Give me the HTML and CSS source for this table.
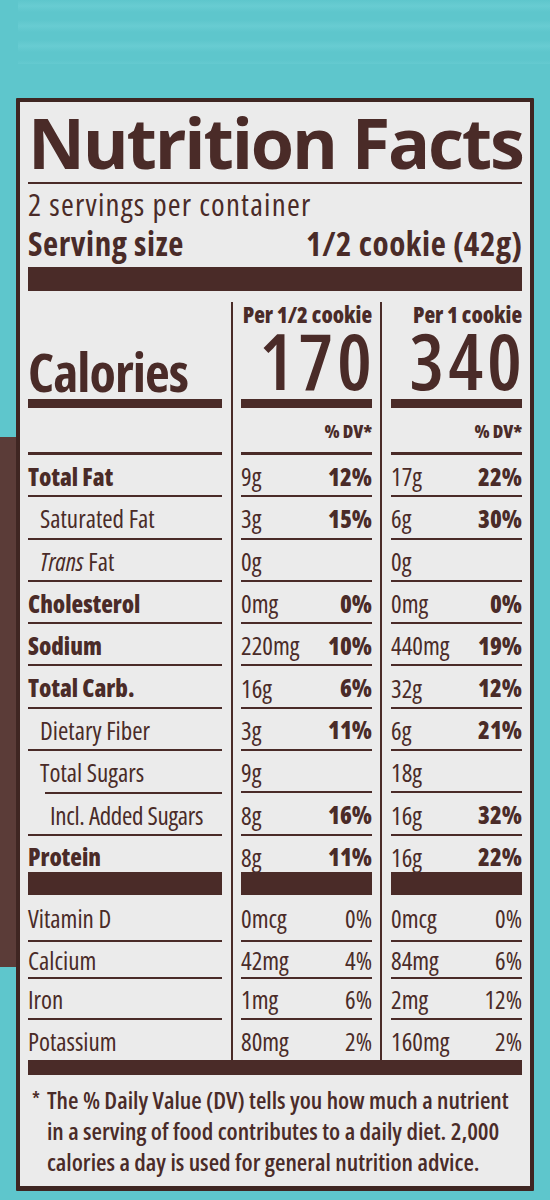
FILE: index.html
```html
<!DOCTYPE html>
<html lang="en"><head><meta charset="UTF-8"><title>Nutrition Facts</title>
<link rel="stylesheet" href="styles.css">
</head><body>

<div class="pack">
  <section class="label">
    <h1 class="title">Nutrition Facts</h1>
    <div class="servings">2 servings per container</div>
    <div class="size"><span>Serving size</span><span>1/2 cookie (42g)</span></div>
    <div class="bar thick"></div>

    <div class="facts">
      <!-- calories -->
      <div class="cell first"><div class="in cal"><span class="cal-name">Calories</span></div></div>
      <div class="cell mid"><div class="in cal"><span class="per">Per 1/2 cookie</span><span class="kcal">170</span></div></div>
      <div class="cell last"><div class="in cal"><span class="per">Per 1 cookie</span><span class="kcal">340</span></div></div>

      <div class="cell first"><div class="in dv"></div></div>
      <div class="cell mid"><div class="in dv"><b>% DV*</b></div></div>
      <div class="cell last"><div class="in dv"><b>% DV*</b></div></div>

      <div class="cell first"><div class="in"><b>Total Fat</b></div></div>
      <div class="cell mid"><div class="in"><span>9g</span><b>12%</b></div></div>
      <div class="cell last"><div class="in"><span>17g</span><b>22%</b></div></div>

      <div class="cell first"><div class="in sub">Saturated Fat</div></div>
      <div class="cell mid"><div class="in"><span>3g</span><b>15%</b></div></div>
      <div class="cell last"><div class="in"><span>6g</span><b>30%</b></div></div>

      <div class="cell first"><div class="in sub"><span><i>Trans</i> Fat</span></div></div>
      <div class="cell mid"><div class="in"><span>0g</span></div></div>
      <div class="cell last"><div class="in"><span>0g</span></div></div>

      <div class="cell first"><div class="in"><b>Cholesterol</b></div></div>
      <div class="cell mid"><div class="in"><span>0mg</span><b>0%</b></div></div>
      <div class="cell last"><div class="in"><span>0mg</span><b>0%</b></div></div>

      <div class="cell first"><div class="in"><b>Sodium</b></div></div>
      <div class="cell mid"><div class="in"><span>220mg</span><b>10%</b></div></div>
      <div class="cell last"><div class="in"><span>440mg</span><b>19%</b></div></div>

      <div class="cell first"><div class="in"><b>Total Carb.</b></div></div>
      <div class="cell mid"><div class="in"><span>16g</span><b>6%</b></div></div>
      <div class="cell last"><div class="in"><span>32g</span><b>12%</b></div></div>

      <div class="cell first"><div class="in sub">Dietary Fiber</div></div>
      <div class="cell mid"><div class="in"><span>3g</span><b>11%</b></div></div>
      <div class="cell last"><div class="in"><span>6g</span><b>21%</b></div></div>

      <div class="cell first"><div class="in sub short">Total Sugars</div></div>
      <div class="cell mid"><div class="in"><span>9g</span></div></div>
      <div class="cell last"><div class="in"><span>18g</span></div></div>

      <div class="cell first"><div class="in sub2">Incl. Added Sugars</div></div>
      <div class="cell mid"><div class="in"><span>8g</span><b>16%</b></div></div>
      <div class="cell last"><div class="in"><span>16g</span><b>32%</b></div></div>

      <div class="cell first"><div class="in heavy"><b>Protein</b></div></div>
      <div class="cell mid"><div class="in heavy"><span>8g</span><b>11%</b></div></div>
      <div class="cell last"><div class="in heavy"><span>16g</span><b>22%</b></div></div>

      <div class="cell first"><div class="in vit v1">Vitamin D</div></div>
      <div class="cell mid"><div class="in vit v1"><span>0mcg</span><span>0%</span></div></div>
      <div class="cell last"><div class="in vit v1"><span>0mcg</span><span>0%</span></div></div>

      <div class="cell first"><div class="in vit v2">Calcium</div></div>
      <div class="cell mid"><div class="in vit v2"><span>42mg</span><span>4%</span></div></div>
      <div class="cell last"><div class="in vit v2"><span>84mg</span><span>6%</span></div></div>

      <div class="cell first"><div class="in vit">Iron</div></div>
      <div class="cell mid"><div class="in vit"><span>1mg</span><span>6%</span></div></div>
      <div class="cell last"><div class="in vit"><span>2mg</span><span>12%</span></div></div>

      <div class="cell first"><div class="in vit end">Potassium</div></div>
      <div class="cell mid"><div class="in vit end"><span>80mg</span><span>2%</span></div></div>
      <div class="cell last"><div class="in vit end"><span>160mg</span><span>2%</span></div></div>
    </div>
    <div class="bar bottom"></div>

    <p class="note"><span class="star">*</span><span>The % Daily Value (DV) tells you how much a nutrient<br>in a serving of food contributes to a daily diet. 2,000<br>calories a day is used for general nutrition advice.</span></p>
  </section>
  <div class="maker">© MUNK PACK INC., GREENWICH, CT</div>
</div>

</body></html>
```

FILE: styles.css
```css
*{box-sizing:border-box;margin:0;padding:0}
body{width:550px;height:1200px;overflow:hidden;color:#4a2b28;font-family:'Open Sans',sans-serif;font-stretch:75%;
  background:
    linear-gradient(to bottom,#5ec6cc 0,#5ec6cc 437px,#5b3c38 437px,#5b3c38 967px,#5ec6cc 967px) 0 0/18px 100% no-repeat,
    repeating-linear-gradient(to bottom,#5ec6cc 0,#68ccd2 6px,#5ec6cc 12px,#5ec6cc 20px) 0 0/100% 64px no-repeat,
    #5ec6cc}
.pack{padding-top:98px}
/* label */
.label{margin:0 16px;background:#ebebeb;border:4px solid #3f2622;border-bottom-width:5px;padding:6px 8px 9px;border-radius:1px}
.title{font-size:70px;font-weight:700;font-stretch:100%;line-height:68px;letter-spacing:-2.2px;white-space:nowrap;padding-bottom:6px;border-bottom:2px solid #4a2b28}
.servings{font-size:31px;line-height:32px;margin-top:4px;letter-spacing:1.2px}
.size{display:flex;justify-content:space-between;font-size:33px;font-weight:700;line-height:38px;letter-spacing:0.6px;margin-top:5px}
.size span:last-child{margin-right:-0.6px}
.bar{background:#4a2b28}
.thick{height:24px;margin-top:4px}
/* table */
.facts{display:grid;grid-template-columns:203px 149px 142px;margin-top:11px}
.cell.first{padding-right:9px}
.cell.mid{border-left:2px solid #4a2b28;padding:0 8px}
.cell.last{border-left:2px solid #4a2b28;padding-left:9px}
.in{height:42.3px;display:flex;justify-content:space-between;align-items:center;font-size:25px;border-bottom:2.5px solid #4a2b28;white-space:nowrap;padding-top:2px}
.in b{font-weight:800;font-size:24px}
.in.sub{padding-left:12px}
.in.sub2{padding-left:22px;letter-spacing:-0.3px}
.short{border-bottom-color:transparent;position:relative}
.short::after{content:'';position:absolute;left:17px;right:0;bottom:-2.5px;border-bottom:2.5px solid #4a2b28}
.in.cal{height:106px;border-bottom-width:9px;flex-direction:column;align-items:flex-end;justify-content:flex-start;padding-top:0}
.cal-name{align-self:flex-start;font-size:54px;font-weight:700;letter-spacing:-0.9px;margin-top:32px}
.per{font-size:22px;font-weight:800;line-height:24px}
.kcal{font-size:78px;line-height:68px;font-weight:600;letter-spacing:4px;margin-right:-4px}
.in.dv{height:47px;border-bottom-width:3px;justify-content:flex-end}
.in.dv b{font-size:18px}
.in.heavy{height:59px;border-bottom-width:23px;align-items:flex-start;padding-top:4px}
.in.vit{height:41px}
.in.v1{height:47px}
.in.v2{height:37px}
.in.end{border-bottom:none;height:40px}
.bottom{height:15px;margin-top:0}
/* footnote */
.note{display:flex;gap:7px;font-size:24px;font-weight:600;line-height:31px;margin-top:9px;padding-left:4px;white-space:nowrap}
.star{font-size:19px}
.maker{margin:1px 0 0 95px;font-size:22px;font-weight:600;letter-spacing:1px;font-stretch:100%}
```
